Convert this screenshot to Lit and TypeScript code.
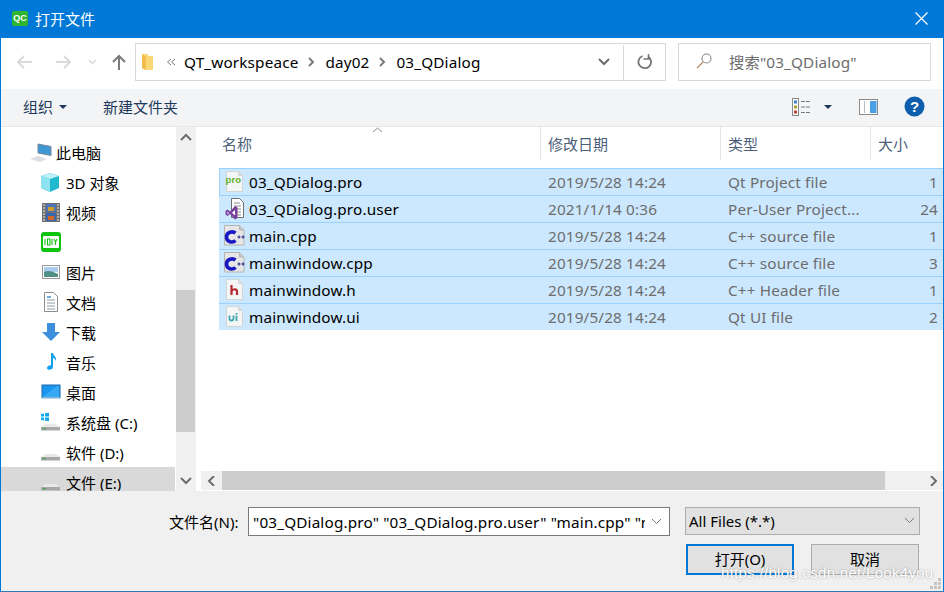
import { LitElement, html, css, svg } from "lit";
import { customElement } from "lit/decorators.js";

const files = [
  { name: "03_QDialog.pro", date: "2019/5/28 14:24", type: "Qt Project file", size: "1", icon: "pro" },
  { name: "03_QDialog.pro.user", date: "2021/1/14 0:36", type: "Per-User Project...", size: "24", icon: "user" },
  { name: "main.cpp", date: "2019/5/28 14:24", type: "C++ source file", size: "1", icon: "cpp" },
  { name: "mainwindow.cpp", date: "2019/5/28 14:24", type: "C++ source file", size: "3", icon: "cpp" },
  { name: "mainwindow.h", date: "2019/5/28 14:24", type: "C++ Header file", size: "1", icon: "h" },
  { name: "mainwindow.ui", date: "2019/5/28 14:24", type: "Qt UI file", size: "2", icon: "ui" },
];

const places = [
  { label: "此电脑", icon: "pc", top: true },
  { label: "3D 对象", icon: "cube" },
  { label: "视频", icon: "film" },
  { label: "", icon: "iqiyi" },
  { label: "图片", icon: "pic" },
  { label: "文档", icon: "doc" },
  { label: "下载", icon: "down" },
  { label: "音乐", icon: "note" },
  { label: "桌面", icon: "desk" },
  { label: "系统盘 (C:)", icon: "sys" },
  { label: "软件 (D:)", icon: "drive" },
  { label: "文件 (E:)", icon: "drive", selected: true },
];

const sheet = (inner: unknown) => svg`
  <path d="M2.500 1.500h12l4 4v16h-16z" fill="#f4f5f5" stroke="#d2d5d5"/>
  <path d="M14.500 1.500v4h4" fill="#dfe1e1" stroke="#d2d5d5"/>
  ${inner}`;

function fileIcon(kind: string) {
  let body: unknown;
  if (kind === "pro") {
    body = sheet(svg`<text x="1.500" y="13" class="ico-txt" fill="#5fb02a">pro</text>`);
  } else if (kind === "user") {
    body = svg`<path d="M7.500 1.500h8l4 4v15h-12z" fill="#fff" stroke="#707070"/>
      <path d="M10 6h6M10 9h7M13 12h4M13 15h4M13 18h4" stroke="#8a8a8a"/>
      <path d="M1.500 14l2-1.500 2.500 2 5-5.500 2.500 1.500v10.500l-2.500 1.500-5-5.500-2.500 2-2-1.500z" fill="#7b3f9d"/>
      <path d="M11 13v5.500l-3-2.700zM3.500 14.500v3l1.500-1.500z" fill="#fff"/>`;
  } else if (kind === "cpp") {
    body = svg`<path d="M.5 1.500h15l4.500 4.500v15H.5z" fill="#e6e6e6" stroke="#b4b4b4"/>
      <path d="M15.500 1.500V6H20" fill="#c9c9c9" stroke="#b4b4b4"/>
      <path d="M11.500 9c-2.500-2-9-1.500-9 4s6.500 6 9 3.500" fill="none" stroke="#1717c4" stroke-width="3.600"/>
      <path d="M13.500 13h3M15 11.500v3M17.500 13h3M19 11.500v3" stroke="#27278c" stroke-width="1.200"/>`;
  } else if (kind === "h") {
    body = sheet(svg`<path d="M7.500 7v10M8 12.500c2-2 5-1.500 5 1V17" fill="none" stroke="#b5282e" stroke-width="2.200"/>`);
  } else {
    body = sheet(svg`<path d="M5.500 10.500v3.500c0 2 3.500 2 4 0v-3.500M12.500 10.500V16M12.500 8v1.500" fill="none" stroke="#3ea6b0" stroke-width="1.800"/>`);
  }
  return html`<svg class="file-ico" width="22" height="24" viewBox="0 0 22 24">${body}</svg>`;
}

function placeIcon(kind: string) {
  const drive = svg`<path d="M1 16l5-3h10l4 3z" fill="#e8e8e8"/><path d="M1 16h19v3.500H1z" fill="#a8a8a8"/>
    <rect x="3" y="17" width="3" height="1.200" fill="#3fa544"/>`;
  const map: Record<string, unknown> = {
    pc: svg`<path d="M8 3l13 2.500v9L8 12z" fill="#3f97d6" stroke="#7c8a96"/><path d="M0 18l8-3 9 3-7 3z" fill="#dde0e3"/>`,
    cube: svg`<path d="M10 2l9 3v12l-9 4-9-4V5z" fill="#22b8d0"/><path d="M1 5l9 3 9-3-9-3z" fill="#bdf0f7"/><path d="M1 5l9 3v13l-9-4z" fill="#8de3ef"/>`,
    film: svg`<rect x="2" y="2" width="18" height="19" fill="#6f6f6f"/><rect x="6" y="3" width="10" height="8" fill="#4a74b8"/><rect x="6" y="12" width="10" height="8" fill="#3a66ae"/>
      <rect x="8" y="6" width="6" height="4" fill="#d49a2a"/><rect x="8" y="15" width="6" height="4" fill="#d0682a"/>
      <path d="M3 4h2M3 7h2M3 10h2M3 13h2M3 16h2M3 19h2M17 4h2M17 7h2M17 10h2M17 13h2M17 16h2M17 19h2" stroke="#eee" stroke-width="1.200"/>`,
    iqiyi: svg`<rect x="1" y="1" width="20" height="20" rx="3" fill="#0fc30f"/><rect x="3" y="5" width="16" height="12" rx="1" fill="#fff"/>
      <path d="M5 8v6M7.500 8h2.500v6H7.500zM12 8v6M14 8l1.500 3 1.500-3M15.500 11v3" stroke="#0fc30f" fill="none" stroke-width="1.100"/>`,
    pic: svg`<rect x="2.500" y="4.500" width="17" height="13" fill="#fff" stroke="#9a9a9a"/><rect x="4" y="6" width="14" height="5" fill="#a9cdec"/><path d="M4 11c4-2 8-1 14 2v3H4z" fill="#4f8f86"/>`,
    doc: svg`<path d="M4.500 1.500h9l4 4v15h-13z" fill="#fff" stroke="#8e8e8e"/><path d="M7 6h4" stroke="#3f8fd8" stroke-width="1.500"/><path d="M7 9h8M7 12h8M7 15h8M7 18h8" stroke="#8e9aa6"/>`,
    down: svg`<path d="M7 2h8v9h5l-9 9-9-9h5z" fill="#3d8edb"/>`,
    note: svg`<path d="M11 2h2c.5 3 4 4 3 8-1-2-2-3-3-3v9c0 3-6 4-6 1 0-2 3-3 4-2.500z" fill="#14a1f0"/>`,
    desk: svg`<rect x="2" y="4" width="18" height="13" fill="#1a96ef" stroke="#1b6aa8"/><path d="M3 16l14-11h2v11z" fill="#38a9f4"/><path d="M2 17h18" stroke="#e6eef5"/>`,
    sys: svg`<path d="M1 3l3-.5v3H1zM5 2.300l4-.6v3.800H5zM1 6.500h3v3l-3-.5zM5 6.500h4v3.800l-4-.6z" fill="#12a9ef"/>${drive}`,
    drive,
  };
  return html`<svg class="place-ico" width="22" height="22" viewBox="0 0 22 22">${map[kind]}</svg>`;
}

const chev = (d: string, color = "#6d6d6d", w = 2) =>
  html`<svg width="12" height="10" viewBox="0 0 12 10"><path d=${d} fill="none" stroke=${color} stroke-width=${w}/></svg>`;

@customElement("app-root")
export class AppRoot extends LitElement {
  static styles = css`
    :host {
      display: block;
      width: 944px;
      height: 592px;
      font-family: "Noto Sans", "Noto Sans CJK SC", sans-serif;
      font-size: 15px;
      color: #000;
      overflow: hidden;
    }
    .win {
      box-sizing: border-box;
      position: relative;
      width: 944px;
      height: 592px;
      display: flex;
      flex-direction: column;
      background: #f0f0f0;
      border: 1px solid #0078d7;
      border-top: 0;
      border-bottom-color: #2b7cb8;
    }
    .title {
      height: 38px;
      flex: none;
      box-sizing: border-box;
      padding: 0 0 2px 11px;
      background: #0078d7;
      display: flex;
      align-items: center;
      color: #fff;
      gap: 7px;
    }
    .qc {
      width: 16px;
      height: 15px;
      border-radius: 2px;
      background: #2fb52f;
      color: #fff;
      font: 700 9px/15px "Liberation Sans", sans-serif;
      text-align: center;
    }
    .close {
      margin-left: auto;
      margin-right: 15px;
      display: flex;
    }
    .nav {
      height: 51px;
      flex: none;
      background: #fff;
      display: flex;
      align-items: flex-start;
      padding-top: 5px;
      box-sizing: border-box;
      font-size: 15.3px;
      letter-spacing: 0.15px;
    }
    .nav-btns {
      width: 134px;
      height: 38px;
      flex: none;
      display: flex;
      align-items: center;
      padding-left: 15px;
      box-sizing: border-box;
    }
    .gap-fwd {
      margin-left: 22px;
    }
    .gap-recent {
      margin-left: 15px;
    }
    .gap-up {
      margin-left: 14px;
    }
    .address {
      box-sizing: border-box;
      width: 531px;
      height: 38px;
      flex: none;
      border: 1px solid #d9d9d9;
      display: flex;
      align-items: center;
      padding: 0 0 1px 5px;
    }
    .addr-folder {
      margin-top: 1px;
    }
    .crumb-sep {
      display: flex;
      margin: 1px 7px 0 8px;
    }
    .crumb-root {
      margin: 1px 6px 0 11px;
    }
    .addr-end {
      margin: 0 0 -1px auto;
      display: flex;
      align-items: center;
      height: 100%;
    }
    .addr-drop {
      width: 39px;
      display: flex;
      justify-content: center;
    }
    .addr-refresh {
      width: 42px;
      height: 100%;
      padding-left: 1px;
      box-sizing: border-box;
      border-left: 1px solid #d9d9d9;
      display: flex;
      align-items: center;
      justify-content: center;
    }
    .search {
      box-sizing: border-box;
      width: 253px;
      height: 38px;
      margin-left: 12px;
      flex: none;
      border: 1px solid #d9d9d9;
      display: flex;
      align-items: center;
      padding: 0 0 2px 17px;
      gap: 17px;
      color: #6d6d6d;
    }
    .toolbar {
      height: 38px;
      flex: none;
      background: #f3f4f6;
      border-bottom: 1px solid #e6e6e6;
      box-sizing: border-box;
      display: flex;
      align-items: center;
      color: #1e395b;
      padding: 0 0 2px 22px;
    }
    .caret {
      width: 0;
      height: 0;
      border: 4px solid transparent;
      border-top: 4px solid #1e395b;
      border-bottom: 0;
      margin-left: 6px;
    }
    .new-folder {
      margin-left: 36px;
    }
    .tool-right {
      margin-left: auto;
      display: flex;
      align-items: center;
    }
    .view-caret {
      margin: 0 27px 0 13px;
    }
    .help {
      margin: 0 18px 0 26px;
    }
    .body {
      flex: none;
      height: 364px;
      display: flex;
      background: #fff;
    }
    .side {
      width: 174px;
      flex: none;
      overflow: hidden;
      padding-top: 10px;
      box-sizing: border-box;
    }
    .place {
      height: 30px;
      display: flex;
      align-items: center;
      padding-left: 39px;
      gap: 4px;
    }
    .place.top {
      padding-left: 29px;
    }
    .place.selected {
      background: #d9d9d9;
    }
    .place-ico {
      flex: none;
    }
    .vbar {
      width: 20px;
      margin-left: 1px;
      flex: none;
      background: #f0f0f0;
      display: flex;
      flex-direction: column;
      align-items: center;
    }
    .vbar .arrow {
      height: 21px;
      flex: none;
      display: flex;
      align-items: center;
      justify-content: center;
    }
    .vtrack {
      flex: 1;
      width: 100%;
      padding-top: 142px;
      box-sizing: border-box;
    }
    .vthumb {
      height: 142px;
      background: #cdcdcd;
      width: 19px;
    }
    .main {
      flex: 1;
      min-width: 0;
      display: flex;
      flex-direction: column;
      overflow: hidden;
    }
    .list {
      flex: 1;
      min-height: 0;
      position: relative;
    }
    .head,
    .row {
      display: grid;
      grid-template-columns: 321px 180px 150px 74px;
      margin-left: 23px;
    }
    .head {
      height: 33px;
      align-items: center;
      color: #4c607a;
      margin-bottom: 8px;
    }
    .head > div {
      height: 33px;
      line-height: 34px;
      box-sizing: border-box;
      padding-left: 7px;
      border-left: 1px solid #e5e5e5;
    }
    .head > div:first-child {
      padding-left: 3px;
      border-left: 0;
    }
    .sort {
      position: absolute;
      left: 176px;
      top: 0;
      display: flex;
    }
    .row {
      height: 27px;
      box-sizing: border-box;
      background: #cce8ff;
      border-top: 1px solid #99d1ff;
      align-items: center;
      color: #6d6d6d;
      font-size: 15.3px;
      letter-spacing: 0.15px;
    }
    .row.first {
      box-shadow: inset 1px 0 #99d1ff;
    }
    .cell {
      padding-left: 8px;
      white-space: nowrap;
    }
    .cell.name {
      color: #000;
      padding-left: 5px;
      display: flex;
      align-items: center;
      gap: 3px;
    }
    .cell.size {
      text-align: right;
      padding-right: 6px;
    }
    .file-ico {
      flex: none;
    }
    .ico-txt {
      font: 700 9.5px "Liberation Sans", sans-serif;
    }
    .hbar {
      height: 19px;
      flex: none;
      margin-left: 5px;
      background: #f0f0f0;
      display: flex;
      margin-bottom: 1px;
    }
    .hbar .arrow {
      width: 21px;
      flex: none;
      display: flex;
      align-items: center;
      justify-content: center;
    }
    .hthumb {
      flex: 1;
      background: #cdcdcd;
    }
    .hbar .arrow.end {
      width: 58px;
      box-sizing: border-box;
      justify-content: flex-end;
      padding-right: 3px;
    }
    .bottom {
      flex: 1;
      box-sizing: border-box;
      padding: 16px 23px 0 168px;
      display: flex;
      flex-direction: column;
    }
    .name-line {
      display: flex;
      align-items: flex-start;
      height: 30px;
      font-size: 15.3px;
      letter-spacing: 0.15px;
    }
    .name-label {
      width: 79px;
      height: 29px;
      display: flex;
      align-items: center;
      font-size: 15px;
      letter-spacing: 0;
      flex: none;
    }
    .name-input {
      box-sizing: border-box;
      width: 422px;
      height: 29px;
      background: #fff;
      border: 1px solid #7a7a7a;
      display: flex;
      align-items: center;
      padding-left: 4px;
      flex: none;
      overflow: hidden;
    }
    .name-value {
      flex: 1;
      overflow: hidden;
      white-space: nowrap;
    }
    .drop {
      width: 24px;
      flex: none;
      display: flex;
      justify-content: center;
    }
    .filter {
      box-sizing: border-box;
      width: 235px;
      height: 28px;
      margin-left: 15px;
      background: #e1e1e1;
      border: 1px solid #adadad;
      display: flex;
      align-items: center;
      justify-content: space-between;
      padding: 0 3px;
      font-size: 15px;
      letter-spacing: 0;
    }
    .btn-line {
      display: flex;
      margin-top: 7px;
      margin-left: 517px;
      gap: 17px;
    }
    .btn {
      box-sizing: border-box;
      width: 108px;
      height: 31px;
      padding-bottom: 2px;
      background: #e1e1e1;
      border: 1px solid #adadad;
      display: flex;
      align-items: center;
      justify-content: center;
    }
    .btn.primary {
      border: 2px solid #0078d7;
    }
    .watermark {
      position: absolute;
      left: 720px;
      top: 564px;
      color: #fff;
      font: 15px "Liberation Sans", sans-serif;
      letter-spacing: 0.3px;
      text-shadow: 0 0 2px rgba(80, 80, 80, 0.55);
    }
    .grip {
      position: absolute;
      right: 1px;
      bottom: 1px;
      display: flex;
    }
  `;

  render() {
    return html`
      <div class="win">
        <div class="title">
          <div class="qc">QC</div>
          <span>打开文件</span>
          <div class="close">
            <svg width="13" height="13" viewBox="0 0 13 13"><path d="M.5.5l12 12M12.500.5l-12 12" stroke="#fff" stroke-width="1.200"/></svg>
          </div>
        </div>

        <div class="nav">
          <div class="nav-btns">
            <svg width="17" height="14" viewBox="0 0 17 14"><path d="M16 7H2M8 1L2 7l6 6" fill="none" stroke="#dadada" stroke-width="2"/></svg>
            <svg class="gap-fwd" width="17" height="14" viewBox="0 0 17 14"><path d="M1 7h14M9 1l6 6-6 6" fill="none" stroke="#dadada" stroke-width="2"/></svg>
            <svg class="gap-recent" width="11" height="8" viewBox="0 0 11 8"><path d="M2 2l3.500 3.500L9 2" fill="none" stroke="#dadada" stroke-width="1.500"/></svg>
            <svg class="gap-up" width="14" height="17" viewBox="0 0 14 17"><path d="M7 16V2M1 8l6-6 6 6" fill="none" stroke="#7a7a7a" stroke-width="2"/></svg>
          </div>
          <div class="address">
            <svg class="addr-folder" width="14" height="18" viewBox="0 0 14 18"><path d="M1 1h6v2h5v14H4l-3-2z" fill="#f9d877"/><path d="M1 1l4 3v13L1 15z" fill="#f2bd4d"/></svg>
            <span class="crumb-sep crumb-root">${chev("M5 2L1.500 5 5 8M9 2L5.500 5 9 8", "#7a7a7a", 1)}</span>
            <span>QT_workspeace</span>
            <span class="crumb-sep">${chev("M3 1l4 4-4 4", "#7a7a7a", 2)}</span>
            <span>day02</span>
            <span class="crumb-sep">${chev("M3 1l4 4-4 4", "#7a7a7a", 2)}</span>
            <span>03_QDialog</span>
            <div class="addr-end">
              <div class="addr-drop">${chev("M1 2l5 5 5-5")}</div>
              <div class="addr-refresh">
                <svg width="16" height="16" viewBox="0 0 16 16"><path d="M11 2.500a6.300 6.300 0 1 1-5.500-.5" fill="none" stroke="#757575" stroke-width="1.800"/><path d="M11.500 0v5h-5" fill="none" stroke="#757575" stroke-width="1.500"/></svg>
              </div>
            </div>
          </div>
          <div class="search">
            <svg width="16" height="16" viewBox="0 0 16 16"><circle cx="10.500" cy="5.500" r="4.500" fill="none" stroke="#8a8a8a" stroke-width="1.100"/><path d="M7 9l-6 6" stroke="#b58a66" stroke-width="1.300"/></svg>
            <span>搜索"03_QDialog"</span>
          </div>
        </div>

        <div class="toolbar">
          <span>组织</span><span class="caret"></span>
          <span class="new-folder">新建文件夹</span>
          <div class="tool-right">
            <svg width="19" height="18" viewBox="0 0 19 18"><rect x=".5" y=".5" width="6" height="17" fill="#fff" stroke="#8a8a8a"/><rect x="2" y="2.500" width="3" height="3" fill="#3f7fd0"/><rect x="2" y="7.500" width="3" height="3" fill="#a8a030"/><rect x="2" y="12.500" width="3" height="3" fill="#c0452f"/><path d="M9 3.500h4M14 3.500h4M9 9h4M14 9h4M9 14.500h4M14 14.500h4" stroke="#7a7a7a"/></svg>
            <span class="caret view-caret"></span>
            <svg width="19" height="16" viewBox="0 0 19 16"><rect x=".5" y=".5" width="18" height="15" fill="#fff" stroke="#8a8a8a"/><rect x="11" y="2" width="6.500" height="12" fill="#4aa0e6"/><rect x="5" y="2" width="1" height="12" fill="#bbb"/></svg>
            <svg class="help" width="21" height="21" viewBox="0 0 21 21"><circle cx="10.500" cy="10.500" r="10" fill="#0d5fae"/><text x="10.500" y="16" text-anchor="middle" fill="#fff" font-family="Liberation Sans" font-weight="700" font-size="15">?</text></svg>
          </div>
        </div>

        <div class="body">
          <div class="side">
            ${places.map(
              (p) => html`
                <div class="place ${p.top ? "top" : ""} ${p.selected ? "selected" : ""}">
                  ${placeIcon(p.icon)}<span>${p.label}</span>
                </div>
              `
            )}
          </div>
          <div class="vbar">
            <div class="arrow">${chev("M1 7l5-5 5 5")}</div>
            <div class="vtrack"><div class="vthumb"></div></div>
            <div class="arrow">${chev("M1 2l5 5 5-5")}</div>
          </div>
          <div class="main">
            <div class="list">
              <div class="sort">
                <svg width="11" height="6" viewBox="0 0 11 6"><path d="M1 5l4.500-4L10 5" fill="none" stroke="#8a8a8a"/></svg>
              </div>
              <div class="head">
                <div>名称</div>
                <div>修改日期</div>
                <div>类型</div>
                <div>大小</div>
              </div>
              ${files.map(
                (f, i) => html`
                  <div class="row ${i === 0 ? "first" : ""}">
                    <div class="cell name">${fileIcon(f.icon)}<span>${f.name}</span></div>
                    <div class="cell">${f.date}</div>
                    <div class="cell">${f.type}</div>
                    <div class="cell size">${f.size}</div>
                  </div>
                `
              )}
            </div>
            <div class="hbar">
              <div class="arrow">${chev("M8 0L3 5l5 5")}</div>
              <div class="hthumb"></div>
              <div class="arrow end">${chev("M3 0l5 5-5 5")}</div>
            </div>
          </div>
        </div>

        <div class="bottom">
          <div class="name-line">
            <span class="name-label">文件名(N):</span>
            <div class="name-input">
              <span class="name-value">"03_QDialog.pro" "03_QDialog.pro.user" "main.cpp" "mainwindow.cpp"</span>
              <span class="drop">${chev("M1 2l4.500 4.500L10 2", "#7a7a7a", 1)}</span>
            </div>
            <div class="filter">
              <span>All Files (*.*)</span>
              ${chev("M1 2l4.500 4.500L10 2", "#7a7a7a", 1)}
            </div>
          </div>
          <div class="btn-line">
            <div class="btn primary">打开(O)</div>
            <div class="btn">取消</div>
          </div>
        </div>

        <div class="watermark">https://blog.csdn.net/Look4you</div>
        <div class="grip">
          <svg width="12" height="12" viewBox="0 0 12 12"><path d="M8 0h3v3H8zM4 4h3v3H4zM8 4h3v3H8zM0 8h3v3H0zM4 8h3v3H4zM8 8h3v3H8z" fill="#c4c4c4"/></svg>
        </div>
      </div>
    `;
  }
}
